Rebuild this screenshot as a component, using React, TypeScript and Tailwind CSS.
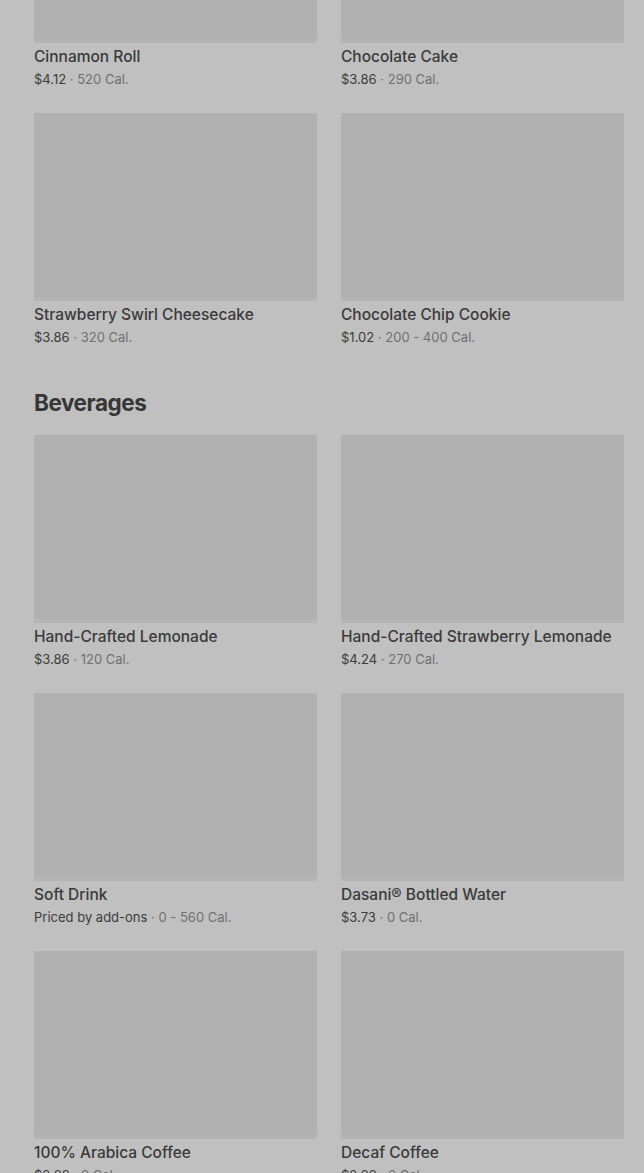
import React from "react"

type Item = { name: string; price: string; cal: string }

const desserts: Item[] = [
  { name: "Cinnamon Roll", price: "$4.12", cal: "520 Cal." },
  { name: "Chocolate Cake", price: "$3.86", cal: "290 Cal." },
  { name: "Strawberry Swirl Cheesecake", price: "$3.86", cal: "320 Cal." },
  { name: "Chocolate Chip Cookie", price: "$1.02", cal: "200 - 400 Cal." },
]

const beverages: Item[] = [
  { name: "Hand-Crafted Lemonade", price: "$3.86", cal: "120 Cal." },
  { name: "Hand-Crafted Strawberry Lemonade", price: "$4.24", cal: "270 Cal." },
  { name: "Soft Drink", price: "Priced by add-ons", cal: "0 - 560 Cal." },
  { name: "Dasani® Bottled Water", price: "$3.73", cal: "0 Cal." },
  { name: "100% Arabica Coffee", price: "$2.88", cal: "0 Cal." },
  { name: "Decaf Coffee", price: "$2.88", cal: "0 Cal." },
]

function MenuCard({ item }: { item: Item }) {
  return (
    <div className="flex flex-col pb-[24px]">
      <div className="h-[188px] w-full bg-[#b1b1b1] border-b-[4px] border-[#b4b4b4]" />
      <div className="mt-[4px] text-[15.5px] leading-5 font-medium text-[#3a3a3a] whitespace-nowrap">
        {item.name}
      </div>
      <div className="mt-[2px] text-[13px] leading-5 whitespace-nowrap">
        <span className="text-[#3c3c3c]">{item.price}</span>
        <span className="text-[#707070]"> · {item.cal}</span>
      </div>
    </div>
  )
}

function Section({ title, items }: { title?: string; items: Item[] }) {
  return (
    <section>
      {title && (
        <h2 className="pt-[17px] pb-[17px] text-[22.5px] leading-[30px] font-bold tracking-[-0.02em] text-[#363636]">
          {title}
        </h2>
      )}
      <div className="grid grid-cols-2 gap-x-[24px]">
        {items.map((item) => (
          <MenuCard key={item.name} item={item} />
        ))}
      </div>
    </section>
  )
}

export default function App() {
  return (
    <div
      className="h-[1173px] w-[644px] overflow-hidden bg-[#c0c0c0] antialiased"
      style={{ fontFamily: "Inter, 'Noto Sans', sans-serif" }}
    >
      <div className="-mt-[145px] pl-[34px] pr-[20px]">
        <Section items={desserts} />
        <Section title="Beverages" items={beverages} />
      </div>
    </div>
  )
}
